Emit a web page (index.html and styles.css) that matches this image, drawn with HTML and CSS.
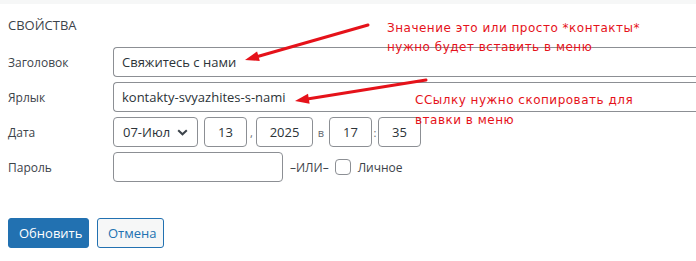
FILE: index.html
```html
<!DOCTYPE html>
<html lang="ru">
<head>
<meta charset="utf-8">
<title>Свойства</title>
<link rel="stylesheet" href="styles.css">
</head>
<body>
<div class="top-strip"></div>
<fieldset class="panel">
  <div class="legend">СВОЙСТВА</div>
  <div class="row">
    <span class="label">Заголовок</span>
    <input class="field wide" type="text" value="Свяжитесь с нами">
  </div>
  <div class="row">
    <span class="label">Ярлык</span>
    <input class="field wide" type="text" value="kontakty-svyazhites-s-nami">
  </div>
  <div class="row">
    <span class="label">Дата</span>
    <div class="date">
      <div class="select field">
        <span>07-Июл</span>
        <svg class="chev" width="11" height="7" viewBox="0 0 11 7"><path d="M1.2 1.2 L5.5 5.3 L9.8 1.2" fill="none" stroke="#3c434a" stroke-width="2"/></svg>
      </div>
      <input class="field num day" type="text" value="13">
      <span class="sep comma">,</span>
      <input class="field num year" type="text" value="2025">
      <span class="sep at">в</span>
      <input class="field num hour" type="text" value="17">
      <span class="sep colon">:</span>
      <input class="field num min" type="text" value="35">
    </div>
  </div>
  <div class="row">
    <span class="label">Пароль</span>
    <input class="field pass" type="text" value="">
    <span class="or">–ИЛИ–</span>
    <span class="check"></span>
    <span class="private">Личное</span>
  </div>
  <div class="actions">
    <button class="btn primary" type="button">Обновить</button>
    <button class="btn secondary" type="button">Отмена</button>
  </div>
</fieldset>

<div class="note note-one">Значение это или просто *контакты*<br>нужно будет вставить в меню</div>
<div class="note note-two">ССылку нужно скопировать для<br>втавки в меню</div>

<svg class="arrows" width="696" height="261" viewBox="0 0 696 261">
  <line x1="368" y1="25" x2="258.5" y2="56.2" stroke="#e5121a" stroke-width="3" stroke-linecap="round"/>
  <polygon points="245,60 259.8,61 257.1,51.4" fill="#e5121a"/>
  <line x1="426" y1="80" x2="308.8" y2="98.8" stroke="#e5121a" stroke-width="3" stroke-linecap="round"/>
  <polygon points="295,101 309.6,103.7 308,93.8" fill="#e5121a"/>
</svg>
</body>
</html>
```
FILE: styles.css
```css
html, body {
  margin: 0;
  padding: 0;
  width: 696px;
  height: 261px;
  overflow: hidden;
  background: #fff;
  font-family: "Open Sans", "Noto Sans", sans-serif;
  color: #3c434a;
  position: relative;
}

.top-strip {
  height: 4px;
  background: #f6f7f7;
}

.panel {
  margin: 0;
  padding: 0 0 0 8px;
  border: 0;
  min-width: 0;
}

.legend {
  font-size: 13px;
  line-height: 16px;
  margin-top: 13px;
  height: 30px;
  color: #3c434a;
}

.row {
  display: flex;
  align-items: center;
  height: 30px;
  margin-bottom: 5px;
  font-size: 12px;
}

.label {
  width: 105px;
  flex: none;
  color: #3c434a;
}

.field {
  box-sizing: border-box;
  height: 30px;
  border: 1px solid #8c8f94;
  border-radius: 4px;
  background: #fff;
  font-family: "Open Sans", "Noto Sans", sans-serif;
  font-size: 13px;
  color: #2c3338;
  padding: 0 8px;
  margin: 0;
  outline: none;
}

.wide {
  width: 583px;
  flex: none;
  border-right: 0;
  border-radius: 4px 0 0 4px;
}

.date {
  display: flex;
  align-items: center;
}

.select {
  width: 85px;
  display: flex;
  align-items: center;
  justify-content: space-between;
  padding: 0 8px 0 9px;
  margin-right: 6px;
}

.chev {
  margin-right: 1px;
}

.num {
  text-align: center;
  padding: 0 2px;
}

.day, .hour, .min {
  width: 43px;
}

.year {
  width: 57px;
}

.sep {
  font-size: 11px;
  color: #646970;
  text-align: center;
}

.comma { width: 9px; }
.at { width: 16px; }
.colon { width: 6px; }

.pass {
  width: 170px;
}

.or {
  margin-left: 7px;
  color: #3c434a;
}

.check {
  box-sizing: border-box;
  width: 16px;
  height: 16px;
  border: 1px solid #8c8f94;
  border-radius: 4px;
  margin-left: 6px;
  background: #fff;
}

.private {
  margin-left: 7px;
}

.actions {
  display: flex;
  gap: 8px;
  margin-top: 36px;
}

.btn {
  box-sizing: border-box;
  height: 30px;
  border-radius: 3px;
  font-family: "Open Sans", "Noto Sans", sans-serif;
  font-size: 13px;
  padding: 0 10px;
  margin: 0;
}

.primary {
  width: 81px;
  background: #2271b1;
  border: 1px solid #2271b1;
  color: #fff;
}

.secondary {
  width: 67px;
  background: #f6f7f7;
  border: 1px solid #2271b1;
  color: #2271b1;
}

.note {
  position: absolute;
  color: #e5121a;
  font-family: "DejaVu Sans", sans-serif;
  font-size: 12px;
  letter-spacing: 0.5px;
  line-height: 19px;
  white-space: nowrap;
}

.note-one {
  left: 387px;
  top: 19px;
}

.note-two {
  left: 415px;
  top: 90px;
  line-height: 20px;
}

.arrows {
  position: absolute;
  left: 0;
  top: 0;
  pointer-events: none;
}
```
